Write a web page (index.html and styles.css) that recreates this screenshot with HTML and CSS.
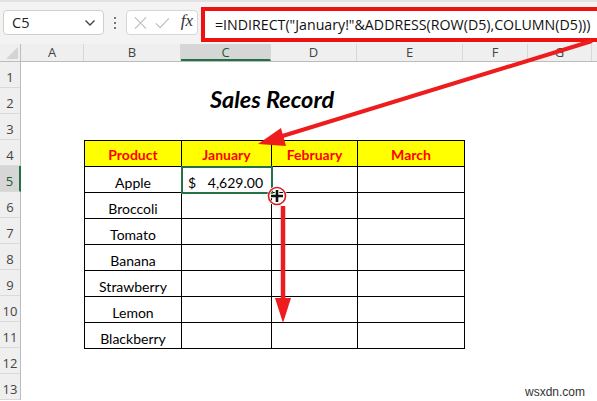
FILE: index.html
```html
<!DOCTYPE html>
<html>
<head>
<meta charset="utf-8">
<link rel="stylesheet" href="styles.css">
</head>
<body>
<div class="page">
  <div class="toolbar">
    <div class="namebox">
      <span class="nb-text">C5</span>
      <svg class="chev" width="12" height="8" viewBox="0 0 12 8"><path d="M1.5 1.5 L6 6 L10.5 1.5" fill="none" stroke="#444" stroke-width="1.4"/></svg>
    </div>
    <div class="dots"><span></span><span></span><span></span></div>
    <div class="fnbox">
      <svg width="14" height="14" viewBox="0 0 14 14"><path d="M1 1 L13 13 M13 1 L1 13" stroke="#bdbdbd" stroke-width="1.2"/></svg>
      <svg width="16" height="14" viewBox="0 0 16 14"><path d="M1 7.5 L5.5 12 L15 2" fill="none" stroke="#bdbdbd" stroke-width="1.2"/></svg>
      <span class="fx">fx</span>
    </div>
    <div class="formula">
      <span class="ftext">=INDIRECT("January!"&amp;ADDRESS(ROW(D5),COLUMN(D5)))</span>
    </div>
  </div>

  <div class="colheads">
    <div class="corner"><span class="tri"></span></div>
    <div class="ch w-a">A</div>
    <div class="ch w-b">B</div>
    <div class="ch w-c sel">C</div>
    <div class="ch w-d">D</div>
    <div class="ch w-e">E</div>
    <div class="ch w-f">F</div>
    <div class="ch w-g">G</div>
    <div class="ch w-rest"></div>
  </div>

  <div class="sheet">
    <div class="rowheads">
      <div class="rh">1</div>
      <div class="rh">2</div>
      <div class="rh">3</div>
      <div class="rh">4</div>
      <div class="rh sel">5</div>
      <div class="rh">6</div>
      <div class="rh">7</div>
      <div class="rh">8</div>
      <div class="rh">9</div>
      <div class="rh">10</div>
      <div class="rh">11</div>
      <div class="rh">12</div>
      <div class="rh">13</div>
    </div>
    <div class="canvas">
      <div class="titlearea"><div class="title">Sales Record</div></div>
      <table class="data">
        <colgroup>
          <col class="c1"><col class="c2"><col class="c3"><col class="c4">
        </colgroup>
        <tr class="head"><td>Product</td><td>January</td><td>February</td><td>March</td></tr>
        <tr><td>Apple</td><td class="active"><span class="cur">$</span><span class="amt">4,629.00</span></td><td></td><td></td></tr>
        <tr><td>Broccoli</td><td></td><td></td><td></td></tr>
        <tr><td>Tomato</td><td></td><td></td><td></td></tr>
        <tr><td>Banana</td><td></td><td></td><td></td></tr>
        <tr><td>Strawberry</td><td></td><td></td><td></td></tr>
        <tr><td>Lemon</td><td></td><td></td><td></td></tr>
        <tr><td>Blackberry</td><td></td><td></td><td></td></tr>
      </table>
    </div>
  </div>

  <svg class="overlay" width="597" height="401" viewBox="0 0 597 401">
    <line x1="592" y1="41" x2="276" y2="138" stroke="#ee1c1c" stroke-width="4"/>
    <polygon points="258,144 281,128 286,146" fill="#ee1c1c"/>
    <line x1="283" y1="206" x2="283" y2="302" stroke="#ee1c1c" stroke-width="4.5"/>
    <polygon points="275,298 291,298 283,323" fill="#ee1c1c"/>
    <circle cx="277" cy="196" r="8.5" fill="none" stroke="#fff" stroke-width="3"/>
    <circle cx="277" cy="196" r="8.5" fill="none" stroke="#d9201f" stroke-width="1.6"/>
    <path d="M270.5 196 H283.5 M277 189.5 V202.5" stroke="#fff" stroke-width="4.6"/>
    <path d="M271 196 H283 M277 190 V202" stroke="#111" stroke-width="2.6"/>
  </svg>

  <div class="watermark">wsxdn.com</div>
</div>
</body>
</html>
```

FILE: styles.css
```css
* { box-sizing: border-box; }
html, body { margin: 0; padding: 0; }
body { width: 597px; height: 401px; overflow: hidden; background: #fff; }

.page {
  position: relative;
  width: 597px;
  height: 401px;
  overflow: hidden;
  font-family: "Open Sans", "Noto Sans", sans-serif;
}

/* toolbar */
.toolbar {
  height: 44px;
  background: #f3f3f3;
  border-top: 2px solid #e2e2e2;
  display: flex;
  align-items: flex-start;
  padding: 8px 0 0 3px;
}
.namebox {
  width: 101px;
  height: 25px;
  background: #fff;
  border: 1px solid #cfcfcf;
  border-radius: 4px;
  display: flex;
  align-items: center;
  justify-content: space-between;
  padding: 0 7px 0 8px;
  font-size: 14.5px;
  color: #222;
}
.nb-text { margin-top: -1px; }
.dots {
  width: 22px;
  height: 25px;
  display: flex;
  flex-direction: column;
  align-items: center;
  justify-content: center;
  gap: 3px;
}
.dots span { width: 2px; height: 2px; background: #777; display: block; }
.fnbox {
  width: 72px;
  height: 25px;
  background: #fff;
  border: 1px solid #d6d6d6;
  border-radius: 4px;
  display: flex;
  align-items: center;
  padding: 0 4px 0 7px;
  gap: 8px;
}
.fx {
  font-family: "Liberation Serif", "DejaVu Serif", serif;
  font-style: italic;
  font-size: 17px;
  color: #333;
  margin-left: 3px;
  margin-top: -3px;
}
.formula {
  margin-left: 3px;
  margin-top: -3px;
  flex: 1;
  height: 35px;
  border: 4px solid #ee1111;
  border-right: none;
  background: #fff;
  display: flex;
  align-items: center;
  padding-left: 10px;
  white-space: nowrap;
  overflow: hidden;
}
.ftext {
  font-family: "Open Sans", sans-serif;
  font-size: 14.2px;
  color: #111;
  letter-spacing: 0;
}

/* column headers */
.colheads {
  display: flex;
  height: 18px;
  background: #efefef;
  border-bottom: 1px solid #bcbcbc;
}
.corner {
  width: 21px;
  border-right: 1px solid #bcbcbc;
  position: relative;
}
.tri {
  position: absolute;
  right: 2px;
  bottom: 2px;
  width: 0;
  height: 0;
  border-left: 12px solid transparent;
  border-bottom: 12px solid #d4d4d4;
}
.ch {
  border-right: 1px solid #d8d8d8;
  font-size: 13px;
  color: #444;
  text-align: center;
  line-height: 17px;
}
.ch.sel {
  background: #d6d6d6;
  border-bottom: 2px solid #217346;
  color: #1d5c37;
}
.w-a { width: 63px; }
.w-b { width: 97px; }
.w-c { width: 90px; }
.w-d { width: 86px; }
.w-e { width: 106px; }
.w-f { width: 65px; }
.w-g { width: 64px; }
.w-rest { flex: 1; border-right: none; }

/* sheet */
.sheet { display: flex; }
.rowheads {
  width: 21px;
  background: #efefef;
  border-right: 1px solid #bcbcbc;
}
.rh {
  height: 26px;
  border-bottom: 1px solid #dadada;
  font-size: 13px;
  color: #444;
  text-align: center;
  line-height: 30px;
}
.rh.sel {
  background: #d6d6d6;
  border-right: 2px solid #217346;
  margin-right: -1px;
  color: #1d5c37;
}
.canvas {
  flex: 1;
  padding-left: 63px;
}
.titlearea {
  height: 78px;
  width: 380px;
  padding-top: 23px;
  text-align: center;
}
.title {
  font-family: "Lato", "Open Sans", sans-serif;
  font-weight: 700;
  font-style: italic;
  font-size: 23.5px;
  color: #000;
  padding-right: 4px;
}

.data {
  border-collapse: collapse;
  table-layout: fixed;
  width: 380px;
  font-family: "Lato", "Open Sans", sans-serif;
  font-size: 14px;
}
.c1 { width: 97px; }
.c2 { width: 90px; }
.c3 { width: 86px; }
.c4 { width: 107px; }
.data td {
  border: 1px solid #000;
  height: 26px;
  padding: 6px 0 0 0;
  text-align: center;
  vertical-align: middle;
  line-height: 18px;
  color: #000;
}
.data tr.head td {
  background: #ffff00;
  color: #ff0000;
  font-weight: 700;
  padding-top: 2px;
}
.data td.active {
  position: relative;
  text-align: right;
  padding-right: 8px;
}
.data td.active::after {
  content: "";
  position: absolute;
  left: -1px;
  top: -1px;
  right: -2px;
  bottom: -2px;
  border: 2px solid #217346;
}
.cur { float: left; padding-left: 6px; }

.overlay {
  position: absolute;
  left: 0;
  top: 0;
  pointer-events: none;
}

.watermark {
  position: absolute;
  right: 12px;
  bottom: 2px;
  font-family: "Liberation Sans", Arial, sans-serif;
  font-size: 12px;
  color: #333;
}
```
